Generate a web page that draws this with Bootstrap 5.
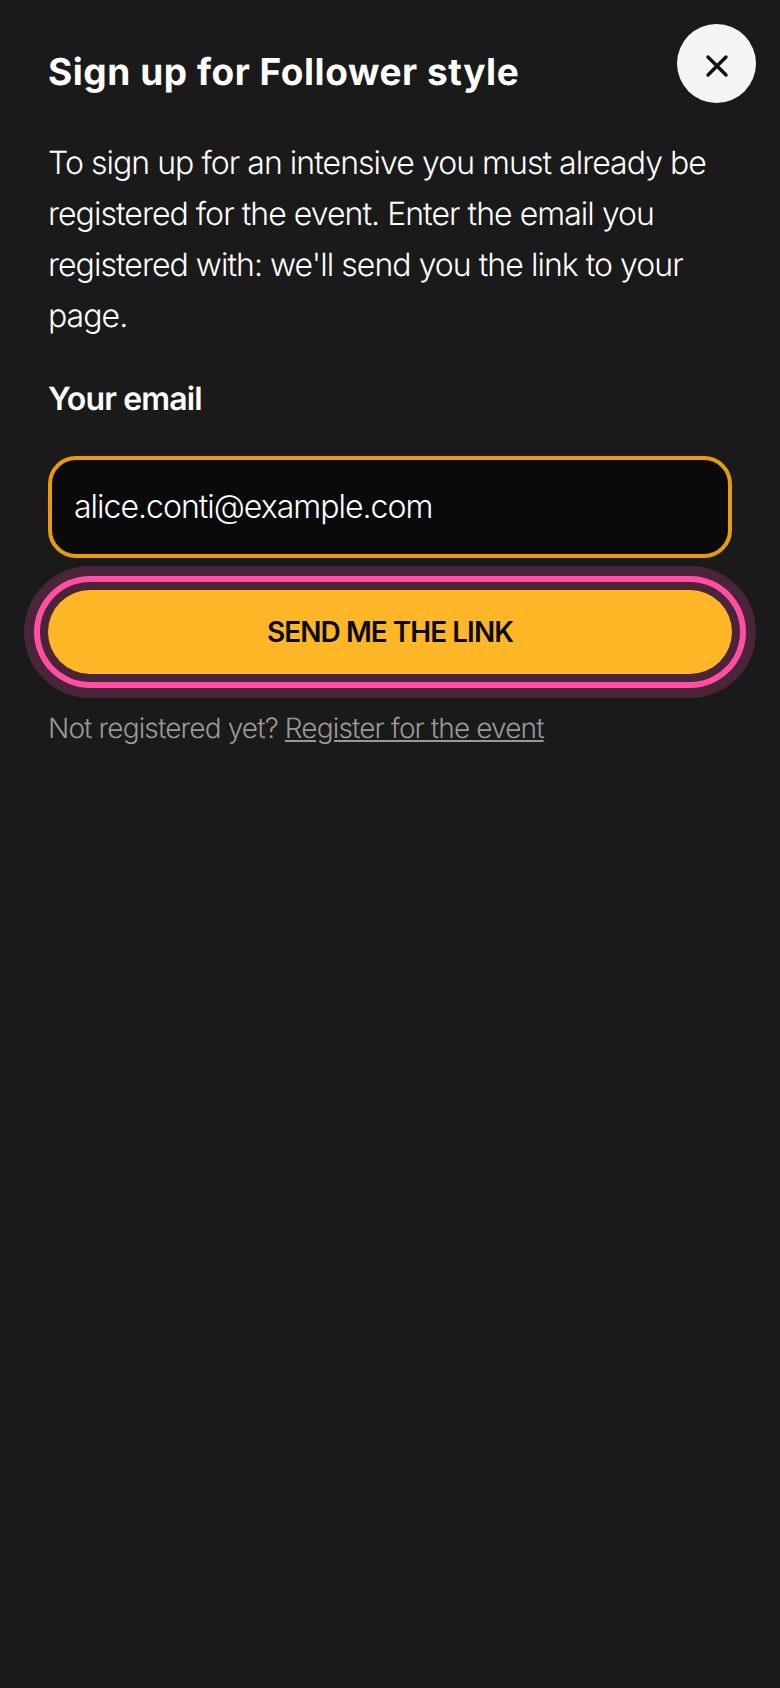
<!DOCTYPE html>
<html lang="en">
<head>
<meta charset="utf-8">
<title>Sign up for Follower style</title>
<link href="https://cdn.jsdelivr.net/npm/bootstrap@5.3.0/dist/css/bootstrap.min.css" rel="stylesheet">
<style>
html,body{height:100%}
body{background:#1a1a1a;color:#fff;font-family:Inter,"Liberation Sans",sans-serif;font-weight:300;text-rendering:geometricPrecision}
.sheet{position:relative;min-height:100%;padding:44px 48px 48px}
.sheet-title{font-family:Inter,"Liberation Sans",sans-serif;font-size:37px;font-weight:700;letter-spacing:.55px;line-height:56px;margin:0 0 37px;color:#fff}
.sheet-close{position:absolute;top:24px;right:24px;width:79px;height:79px;background:#f5f5f5;border:0;padding:4px 0 0}
.sheet-text{font-size:32px;letter-spacing:-.03em;line-height:51px;margin:0 0 34px;color:#fff}
.sheet-label{font-size:32px;font-weight:600;letter-spacing:-.027em;line-height:48px;margin:0 0 33px;color:#fff;display:block}
.sheet-input.form-control{height:102px;background:#0a0a0a;border:4px solid #e89c0c;border-radius:28px;color:#fff;font-size:32px;font-weight:300;letter-spacing:-.031em;padding:0 22px 2px;box-shadow:none}
.sheet-send.btn{height:84px;margin-top:32px;background:#ffb627;border:0;color:#0a0a0a;font-size:28px;font-weight:600;letter-spacing:-.035em;box-shadow:0 0 0 8px #4a2539,0 0 0 14px #ff4fa3,0 0 0 24px #4a2539}
.sheet-foot{font-size:28px;letter-spacing:-.031em;line-height:42px;margin:33px 0 0;color:#999}
.sheet-foot a{color:#999}
</style>
</head>
<body>
<main class="sheet">
  <h1 class="sheet-title">Sign up for Follower style</h1>
  <button type="button" class="sheet-close rounded-circle d-flex align-items-center justify-content-center" aria-label="Close">
    <svg width="24" height="24" viewBox="0 0 24 24" fill="none" stroke="#111" stroke-width="3.4" stroke-linecap="round"><path d="M3 3 21 21M21 3 3 21"/></svg>
  </button>
  <p class="sheet-text">To sign up for an intensive you must already be registered for the event. Enter the email you registered with: we'll send you the link to your page.</p>
  <form>
    <label class="sheet-label" for="em">Your email</label>
    <input id="em" type="email" class="form-control sheet-input" value="alice.conti@example.com">
    <button type="button" class="btn sheet-send w-100 rounded-pill text-uppercase">Send me the link</button>
  </form>
  <p class="sheet-foot">Not registered yet? <a href="#">Register for the event</a></p>
</main>
<script src="https://cdn.jsdelivr.net/npm/bootstrap@5.3.0/dist/js/bootstrap.bundle.min.js"></script>
</body>
</html>
